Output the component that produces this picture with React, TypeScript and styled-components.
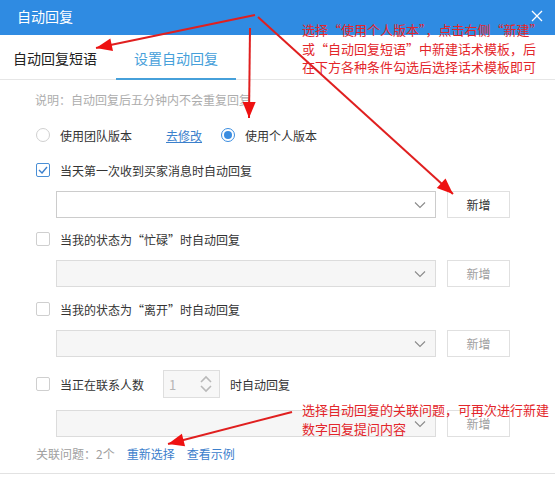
import React from "react";
import styled, { createGlobalStyle } from "styled-components";

const GlobalStyle = createGlobalStyle`
    html, body {
        margin: 0;
        padding: 0;
        background: #fff;
    }
    body {
        width: 555px;
        height: 477px;
        overflow: hidden;
        font-family: "Noto Sans CJK SC", "Microsoft YaHei", sans-serif;
    }
`;

const Page = styled.div`
    position: relative;
    width: 555px;
    height: 477px;
    overflow: hidden;
    background: #fff;
`;

const Header = styled.div`
    height: 35px;
    background: #2f8be2;
    display: flex;
    align-items: center;
    justify-content: space-between;
    padding: 0 12px 4px 17px;
    box-sizing: border-box;
    color: #fff;
    font-size: 14px;
`;

const Close = styled.div`
    width: 12px;
    height: 12px;
    display: flex;
`;

const Tabs = styled.div`
    height: 45px;
    display: flex;
    border-bottom: 1px solid #e6e6e6;
    box-sizing: border-box;
    padding-left: 0;
`;

const Tab = styled.div<{ $active?: boolean }>`
    display: flex;
    align-items: center;
    justify-content: center;
    box-sizing: border-box;
    width: ${(p) => (p.$active ? "120px" : "113px")};
    font-size: 14px;
    color: ${(p) => (p.$active ? "#46a0da" : "#222")};
    border-bottom: 2px solid ${(p) => (p.$active ? "#46a0da" : "transparent")};
    margin-bottom: -1px;
    padding-top: 2px;
    &:first-child {
        padding-right: 3px;
    }
    &:nth-child(2) {
        margin-left: 3px;
    }
`;

const Body = styled.div`
    padding: 10px 0 0 36px;
    display: flex;
    flex-direction: column;
`;

const Note = styled.div`
    font-size: 12px;
    line-height: 20px;
    color: #adadad;
    margin-left: -1px;
`;

const Row = styled.div<{ $mt: number }>`
    display: flex;
    align-items: center;
    height: 20px;
    margin-top: ${(p) => p.$mt}px;
    font-size: 12px;
    color: #333;
`;

const Label = styled.span`
    margin-left: 10px;
    white-space: nowrap;
`;

const RadioDot = styled.span<{ $on?: boolean }>`
    width: 14px;
    height: 14px;
    box-sizing: border-box;
    border-radius: 50%;
    border: 1px solid ${(p) => (p.$on ? "#3b8de0" : "#d0d0d0")};
    display: flex;
    align-items: center;
    justify-content: center;
    flex: none;
    &::after {
        content: "";
        width: 8px;
        height: 8px;
        border-radius: 50%;
        background: ${(p) => (p.$on ? "#3b8de0" : "transparent")};
    }
`;

const Link = styled.span<{ $underline?: boolean; $ml: number }>`
    color: #3b80cc;
    margin-left: ${(p) => p.$ml}px;
    text-decoration: ${(p) => (p.$underline ? "underline" : "none")};
    white-space: nowrap;
`;

const Gap = styled.span<{ $w: number }>`
    width: ${(p) => p.$w}px;
    flex: none;
`;

const Box = styled.span<{ $on?: boolean }>`
    width: 14px;
    height: 14px;
    box-sizing: border-box;
    border-radius: 2px;
    border: 1px solid ${(p) => (p.$on ? "#4a8fd6" : "#cfcfcf")};
    display: flex;
    align-items: center;
    justify-content: center;
    flex: none;
    background: #fff;
`;

const FieldRow = styled.div<{ $mt: number }>`
    display: flex;
    margin-top: ${(p) => p.$mt}px;
    margin-left: 20px;
    gap: 11px;
`;

const Select = styled.div<{ $disabled?: boolean }>`
    width: 380px;
    height: 27px;
    box-sizing: border-box;
    border: 1px solid ${(p) => (p.$disabled ? "#dcdcdc" : "#cccccc")};
    background: ${(p) => (p.$disabled ? "#f6f6f6" : "#fff")};
    display: flex;
    align-items: center;
    justify-content: flex-end;
    padding-right: 9px;
`;

const AddButton = styled.div<{ $disabled?: boolean }>`
    width: 63px;
    height: 27px;
    box-sizing: border-box;
    border: 1px solid #e0e0e0;
    background: #fff;
    display: flex;
    align-items: center;
    justify-content: center;
    font-size: 12px;
    color: ${(p) => (p.$disabled ? "#a0a0a0" : "#333")};
`;

const NumberInput = styled.div`
    width: 57px;
    height: 28px;
    box-sizing: border-box;
    margin-left: 19px;
    border: 1px solid #dedede;
    background: #f7f7f7;
    display: flex;
    align-items: center;
    justify-content: space-between;
    padding: 0 6px 0 5px;
    color: #b5b5b5;
    font-size: 13px;
`;

const Footer = styled.div`
    display: flex;
    align-items: center;
    height: 20px;
    margin-top: 6px;
    font-size: 12px;
    color: #a0a0a0;
`;

const BottomLine = styled.div`
    position: absolute;
    left: 0;
    right: 0;
    top: 473px;
    border-top: 1px solid #e2e2e2;
`;

const Overlay = styled.svg`
    position: absolute;
    left: 0;
    top: 0;
    pointer-events: none;
`;

const Callout = styled.div<{ $top: number }>`
    position: absolute;
    left: 302px;
    top: ${(p) => p.$top}px;
    font-family: "Noto Sans CJK SC", sans-serif;
    font-size: 13px;
    line-height: 18.5px;
    color: #e3262b;
    white-space: nowrap;
`;

const Chevron = () => (
    <svg width="12" height="8" viewBox="0 0 12 8">
        <path d="M1 1.5 L6 6.5 L11 1.5" fill="none" stroke="#8a8a8a" strokeWidth="1.1" />
    </svg>
);

const Spinner = () => (
    <svg width="14" height="20" viewBox="0 0 14 20">
        <path d="M2 8 L7 3 L12 8" fill="none" stroke="#b9b9b9" strokeWidth="1.6" />
        <path d="M2 12 L7 17 L12 12" fill="none" stroke="#b9b9b9" strokeWidth="1.6" />
    </svg>
);

const Check = () => (
    <svg width="10" height="8" viewBox="0 0 10 8">
        <path d="M1 4 L4 7 L9 1" fill="none" stroke="#3b7fcc" strokeWidth="1.4" />
    </svg>
);

const arrows = [
    { sx: 255, sy: 15, tx: 96, ty: 48 },
    { sx: 250, sy: 28, tx: 249, ty: 118 },
    { sx: 258, sy: 17, tx: 453, ty: 194 },
    { sx: 292, sy: 412, tx: 168, ty: 444 },
];

function head(sx: number, sy: number, tx: number, ty: number) {
    const dx = tx - sx;
    const dy = ty - sy;
    const len = Math.hypot(dx, dy);
    const ux = dx / len;
    const uy = dy / len;
    const bx = tx - ux * 16;
    const by = ty - uy * 16;
    const w = 6.5;
    return `${tx},${ty} ${bx - uy * w},${by + ux * w} ${bx + uy * w},${by - ux * w}`;
}

const Field = ({ mt, disabled }: { mt: number; disabled?: boolean }) => (
    <FieldRow $mt={mt}>
        <Select $disabled={disabled}>
            <Chevron />
        </Select>
        <AddButton $disabled={disabled}>新增</AddButton>
    </FieldRow>
);

const App = () => {
    return (
        <Page>
            <GlobalStyle />
            <Header>
                <span>自动回复</span>
                <Close>
                    <svg width="12" height="12" viewBox="0 0 12 12">
                        <path d="M1 1 L11 11 M11 1 L1 11" stroke="#fff" strokeWidth="1.3" />
                    </svg>
                </Close>
            </Header>
            <Tabs>
                <Tab>自动回复短语</Tab>
                <Tab $active>设置自动回复</Tab>
            </Tabs>
            <Body>
                <Note>说明：自动回复后五分钟内不会重复回复</Note>
                <Row $mt={15}>
                    <RadioDot />
                    <Label>使用团队版本</Label>
                    <Link $underline $ml={34}>去修改</Link>
                    <Gap $w={19} />
                    <RadioDot $on />
                    <Label>使用个人版本</Label>
                </Row>
                <Row $mt={15}>
                    <Box $on>
                        <Check />
                    </Box>
                    <Label>当天第一次收到买家消息时自动回复</Label>
                </Row>
                <Field mt={11} />
                <Row $mt={11}>
                    <Box />
                    <Label>当我的状态为“忙碌”时自动回复</Label>
                </Row>
                <Field mt={11} disabled />
                <Row $mt={12}>
                    <Box />
                    <Label>当我的状态为“离开”时自动回复</Label>
                </Row>
                <Field mt={11} disabled />
                <Row $mt={17}>
                    <Box />
                    <Label>当正在联系人数</Label>
                    <NumberInput>
                        <span>1</span>
                        <Spinner />
                    </NumberInput>
                    <Label>时自动回复</Label>
                </Row>
                <Field mt={16} disabled />
                <Footer>
                    <span>关联问题：2个</span>
                    <Link $ml={12}>重新选择</Link>
                    <Link $ml={12}>查看示例</Link>
                </Footer>
            </Body>
            <BottomLine />
            <Overlay width="555" height="477" viewBox="0 0 555 477">
                {arrows.map((a, i) => (
                    <g key={i}>
                        <line x1={a.sx} y1={a.sy} x2={a.tx} y2={a.ty} stroke="#e01f1f" strokeWidth="2" />
                        <polygon points={head(a.sx, a.sy, a.tx, a.ty)} fill="#ee1111" />
                    </g>
                ))}
            </Overlay>
            <Callout $top={21}>
                选择“使用个人版本”，点击右侧“新建”
                <br />
                或“自动回复短语”中新建话术模板，后
                <br />
                在下方各种条件勾选后选择话术模板即可
            </Callout>
            <Callout $top={401}>
                选择自动回复的关联问题，可再次进行新建
                <br />
                数字回复提问内容
            </Callout>
        </Page>
    );
};

export default App;
